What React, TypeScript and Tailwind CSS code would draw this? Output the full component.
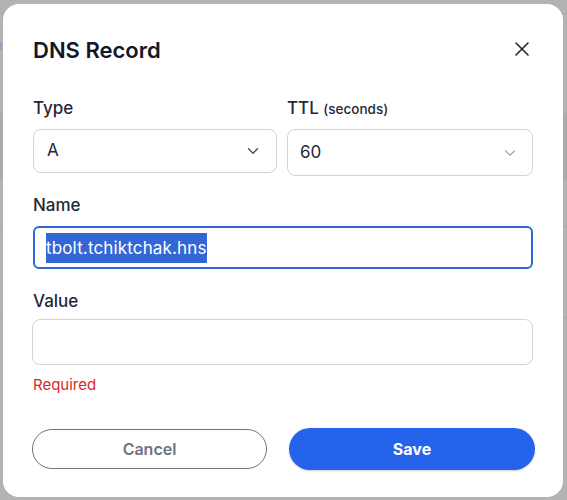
import React from "react";

const font = { fontFamily: "Inter, 'Noto Sans', sans-serif" };

export default function App() {
  return (
    <div className="relative w-[567px] h-[500px] bg-[#b3b3b3] overflow-hidden pl-[3px] pr-[4px] pt-[4px] pb-[3px]" style={font}>
      {/* page behind the overlay */}
      <div className="absolute left-0 right-0 top-[13px] h-px bg-[#a8a8a8]" />
      <div className="absolute left-0 right-0 top-[113px] h-[67px] bg-[#aaaaaa]" />
      <div className="absolute left-0 right-0 top-[226px] h-px bg-[#a5a5a5]" />
      <div className="absolute left-0 right-0 top-[317px] h-px bg-[#a5a5a5]" />
      <div className="absolute left-0 top-[42px] w-[2px] h-[8px] bg-[#8ea3c4]" />

      <div className="relative h-full w-full rounded-[16px] bg-white px-[30px] pt-[32px]">
        <div className="flex h-[28px] items-center justify-between">
          <h2 className="text-[22px] leading-[28px] font-semibold text-[#111827]">DNS Record</h2>
          <button className="-mt-[2px] flex h-[22px] w-[22px] items-center justify-center text-[#1f2937]">
            <svg viewBox="0 0 14 14" className="h-[14px] w-[14px]" fill="none" stroke="currentColor" strokeWidth={1.6} strokeLinecap="round">
              <path d="M1 1l12 12M13 1L1 13" />
            </svg>
          </button>
        </div>

        <div className="mt-[32px] flex gap-[10px] items-start">
          <div className="w-[244px]">
            <div className="mb-[9px] h-[24px] text-[17px] leading-[24px] font-medium text-[#1f2937]">Type</div>
            <div className="flex h-[44px] items-center justify-between rounded-[8px] border border-[#d1d5db] pl-[13px] pr-[14px]">
              <span className="text-[17px] text-[#1f2937]">A</span>
              <svg viewBox="0 0 24 24" fill="none" stroke="currentColor" strokeWidth={2} strokeLinecap="round" strokeLinejoin="round" className="h-[18px] w-[18px] text-[#4b5563]">
                <path d="m6 9 6 6 6-6" />
              </svg>
            </div>
          </div>
          <div className="w-[246px]">
            <div className="mb-[9px] h-[24px] text-[17px] leading-[24px] font-medium text-[#1f2937]">
              TTL <span className="text-[13.5px] leading-none font-medium">(seconds)</span>
            </div>
            <div className="flex h-[47px] items-center justify-between rounded-[8px] border border-[#d1d5db] pl-[12px] pr-[13px]">
              <span className="text-[17px] text-[#1f2937]">60</span>
              <svg viewBox="0 0 24 24" fill="none" stroke="currentColor" strokeWidth={1.5} strokeLinecap="round" strokeLinejoin="round" className="h-[18px] w-[18px] text-[#9ca3af]">
                <path d="m6 9 6 6 6-6" />
              </svg>
            </div>
          </div>
        </div>

        <div className="mt-[17px] mb-[9px] text-[17px] leading-[24px] font-medium text-[#1f2937]">Name</div>
        <div className="flex h-[43px] items-center rounded-[6px] border-2 border-[#2f66dc] pl-[11px]">
          <span className="inline-block bg-[#3367d6] text-[17px] leading-[30px] tracking-[0.15px] text-white">tbolt.tchiktchak.hns</span>
        </div>

        <div className="mt-[20px] mb-[6px] text-[17px] leading-[24px] font-medium text-[#1f2937]">Value</div>
        <div className="-ml-px h-[46px] rounded-[8px] border border-[#d1d5db]" />
        <div className="mt-[10px] text-[15px] leading-[20px] text-[#dc2626]">Required</div>

        <div className="mt-[34px] flex -ml-px">
          <button className="h-[40px] w-[235px] shrink-0 rounded-full border border-[#6b7280] text-[16px] font-semibold text-[#6b7280]">Cancel</button>
          <button className="ml-[22px] h-[42px] -mt-px w-[246px] shrink-0 rounded-full bg-[#2563eb] text-[16px] font-bold text-white shadow-[0_1px_2px_rgba(0,0,0,0.2)]">Save</button>
        </div>
      </div>
    </div>
  );
}
